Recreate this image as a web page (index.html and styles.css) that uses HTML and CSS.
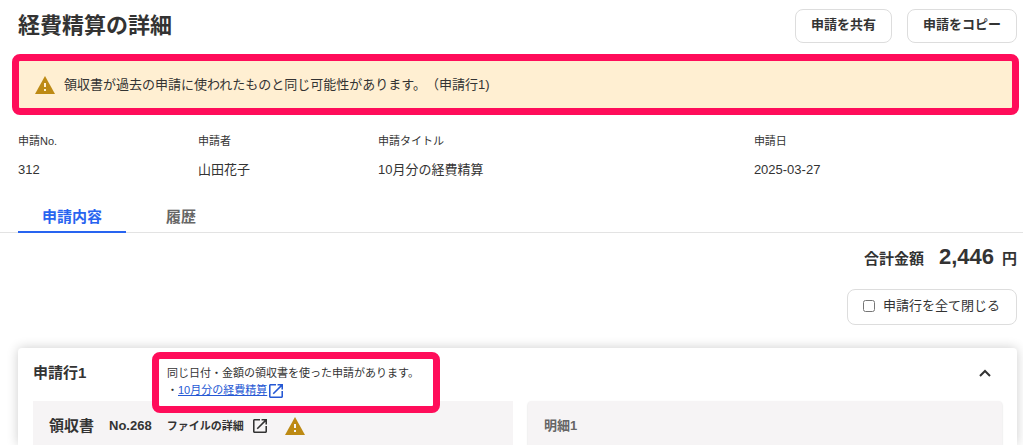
FILE: index.html
```
<!DOCTYPE html>
<html lang="ja">
<head>
    <meta charset="UTF-8">
    <meta name="viewport" content="width=device-width, initial-scale=1.0">
    <title>経費精算の詳細</title>
    <link rel="stylesheet" href="styles.css">
</head>
<body>
    <header class="page-header">
        <h1>経費精算の詳細</h1>
        <div class="header-actions">
            <button type="button" class="btn">申請を共有</button>
            <button type="button" class="btn">申請をコピー</button>
        </div>
    </header>

    <div class="alert" role="alert">
        <svg class="icon-warning" viewBox="0 0 20 18" aria-hidden="true">
            <path d="M10 0L20 18H0z" fill="#bd8a14"/>
            <path d="M9 7h2v4H9zM9 13h2v2H9z" fill="#ffefd2"/>
        </svg>
        <span>領収書が過去の申請に使われたものと同じ可能性があります。（申請行1)</span>
    </div>

    <dl class="summary">
        <div>
            <dt>申請No.</dt>
            <dd>312</dd>
        </div>
        <div>
            <dt>申請者</dt>
            <dd>山田花子</dd>
        </div>
        <div>
            <dt>申請タイトル</dt>
            <dd>10月分の経費精算</dd>
        </div>
        <div>
            <dt>申請日</dt>
            <dd>2025-03-27</dd>
        </div>
    </dl>

    <nav class="tabs">
        <button type="button" class="tab active">申請内容</button>
        <button type="button" class="tab">履歴</button>
    </nav>

    <div class="total">
        <span>合計金額</span>
        <span class="total-amount">2,446</span>
        <span>円</span>
    </div>

    <div class="toggle-row">
        <label class="toggle-all" for="closeAll">
            <input type="checkbox" id="closeAll">
            申請行を全て閉じる
        </label>
    </div>

    <section class="card">
        <div class="card-header">
            <h2>申請行1</h2>
            <button type="button" class="icon-btn" aria-label="閉じる">
                <svg viewBox="0 0 12 8" width="12" height="8" aria-hidden="true">
                    <path d="M1 7l5-5 5 5" fill="none" stroke="#333" stroke-width="2"/>
                </svg>
            </button>
        </div>
        <div class="panels">
            <div class="panel receipt">
                <h3>領収書</h3>
                <span class="receipt-no">No.268</span>
                <a class="file-link" href="#">
                    ファイルの詳細
                    <svg class="icon-open" viewBox="3 3 18 18" aria-hidden="true">
                        <path d="M19 19H5V5h7V3H5c-1.11 0-2 .9-2 2v14c0 1.1.89 2 2 2h14c1.1 0 2-.9 2-2v-7h-2v7zM14 3v2h3.59l-9.83 9.83 1.41 1.41L19 6.41V10h2V3h-7z" fill="currentColor"/>
                    </svg>
                </a>
                <svg class="icon-warning" viewBox="0 0 20 18" aria-hidden="true">
                    <path d="M10 0L20 18H0z" fill="#bd8a14"/>
                    <path d="M9 7h2v4H9zM9 13h2v2H9z" fill="#f6f4f5"/>
                </svg>
            </div>
            <div class="panel detail">
                <h3>明細1</h3>
            </div>
        </div>

        <div class="tooltip" role="tooltip">
            <p>同じ日付・金額の領収書を使った申請があります。</p>
            <p class="tooltip-item">・<a href="#">10月分の経費精算</a><svg class="icon-open" viewBox="3 3 18 18" aria-hidden="true">
                <path d="M19 19H5V5h7V3H5c-1.11 0-2 .9-2 2v14c0 1.1.89 2 2 2h14c1.1 0 2-.9 2-2v-7h-2v7zM14 3v2h3.59l-9.83 9.83 1.41 1.41L19 6.41V10h2V3h-7z" fill="#2558d4"/>
            </svg></p>
        </div>
    </section>
</body>
</html>
```
FILE: styles.css
```
* {
    box-sizing: border-box;
}
body {
    display: flex;
    flex-direction: column;
    min-height: 100vh;
    margin: 0;
    background: #fff;
    color: #333;
    font-family: "Liberation Sans", "Noto Sans CJK JP", sans-serif;
    font-size: 13px;
    line-height: 20px;
    text-spacing-trim: space-all;
}
h1, h2, h3, p, dl, dd {
    margin: 0;
}
button, input {
    font: inherit;
    color: inherit;
}
button {
    cursor: pointer;
}

.page-header {
    display: flex;
    justify-content: space-between;
    align-items: center;
    padding: 9px 6px 11px 18px;
}
.page-header h1 {
    font-size: 22px;
    line-height: 32px;
}
.header-actions {
    display: flex;
    gap: 15px;
}
.btn {
    padding: 5px 15px 7px;
    border: 1px solid #ddd;
    border-radius: 8px;
    background: #fff;
    font-weight: bold;
}

.alert {
    display: flex;
    align-items: center;
    gap: 9px;
    margin: 0 4px 0 12px;
    padding: 14px 16px 13px;
    border: 7px solid #ff0d5a;
    border-radius: 8px;
    background: #ffefd2;
}
.icon-warning {
    flex: none;
    width: 20px;
    height: 18px;
}

.summary {
    display: grid;
    grid-template-columns: 180px 180px 10fr 7fr;
    padding: 16px 6px 0 18px;
}
.summary dt {
    margin-bottom: 9px;
    font-size: 11px;
}

.tabs {
    display: flex;
    gap: 16px;
    margin-top: 20px;
    padding-left: 18px;
    box-shadow: inset 0 -1px #e3e3e3;
}
.tab {
    padding: 7px 24px 4px;
    border: 0;
    border-bottom: 2px solid transparent;
    background: none;
    color: #666;
    font-size: 15px;
    font-weight: bold;
}
.tab.active {
    border-bottom-color: #2864f0;
    color: #2864f0;
}

.total {
    display: flex;
    justify-content: flex-end;
    align-items: baseline;
    padding: 8px 6px 0 18px;
    font-size: 15px;
    font-weight: bold;
    line-height: 32px;
}
.total-amount {
    margin: 0 8px 0 15px;
    font-size: 22px;
}

.toggle-row {
    display: flex;
    justify-content: flex-end;
    padding: 14px 6px 23px 18px;
}
.toggle-all {
    display: flex;
    align-items: center;
    gap: 8px;
    padding: 6px 16px 8px 15px;
    border: 1px solid #ddd;
    border-radius: 8px;
    cursor: pointer;
}
.toggle-all input {
    width: 12px;
    height: 12px;
    margin: 0;
}

.card {
    display: flex;
    flex: 1;
    flex-direction: column;
    position: relative;
    margin: 0 6px 0 18px;
    padding: 0 15px;
    border-radius: 4px 4px 0 0;
    background: #fff;
    box-shadow: 0 0 12px rgba(0, 0, 0, 0.2);
}
.card-header {
    display: flex;
    justify-content: space-between;
    align-items: center;
    padding: 13px 6px 17px 0;
}
.card-header h2 {
    font-size: 15px;
    line-height: 23px;
}
.icon-btn {
    display: flex;
    padding: 5px;
    border: 0;
    background: none;
}
.panels {
    display: grid;
    flex: 1;
    grid-template-columns: 81fr 80fr;
    gap: 15px;
}
.panel {
    display: flex;
    align-items: flex-start;
    padding: 15px 16px 0;
    background: #f6f4f5;
}
.panel h3 {
    font-size: 15px;
}
.receipt {
    gap: 15px;
    align-items: center;
    padding-bottom: 9px;
}
.receipt-no {
    font-weight: bold;
}
.file-link {
    display: flex;
    align-items: center;
    gap: 9px;
    margin-right: 3px;
    color: #333;
    font-size: 11px;
    font-weight: bold;
    text-decoration: none;
}
.icon-open {
    flex: none;
    width: 14px;
    height: 14px;
}
.panel .detail {
    padding-top: 16px;
}
.detail {
    border-radius: 4px 4px 0 0;
    box-shadow: 0 1px 2px rgba(0, 0, 0, 0.2);
}
.panel.detail h3 {
    color: #666;
    font-size: 13px;
}

/* duplicate receipt notice shown above the warning icon */
.tooltip {
    position: absolute;
    top: 4px;
    left: 134px;
    padding: 6px 14px 7px 8px;
    border: 7px solid #ff0d5a;
    border-radius: 8px;
    background: #fff;
    font-size: 11px;
    line-height: 17px;
}
.tooltip-item {
    display: flex;
    align-items: center;
}
.tooltip a {
    color: #2558d4;
}
.tooltip .icon-open {
    margin-left: 2px;
}
```
